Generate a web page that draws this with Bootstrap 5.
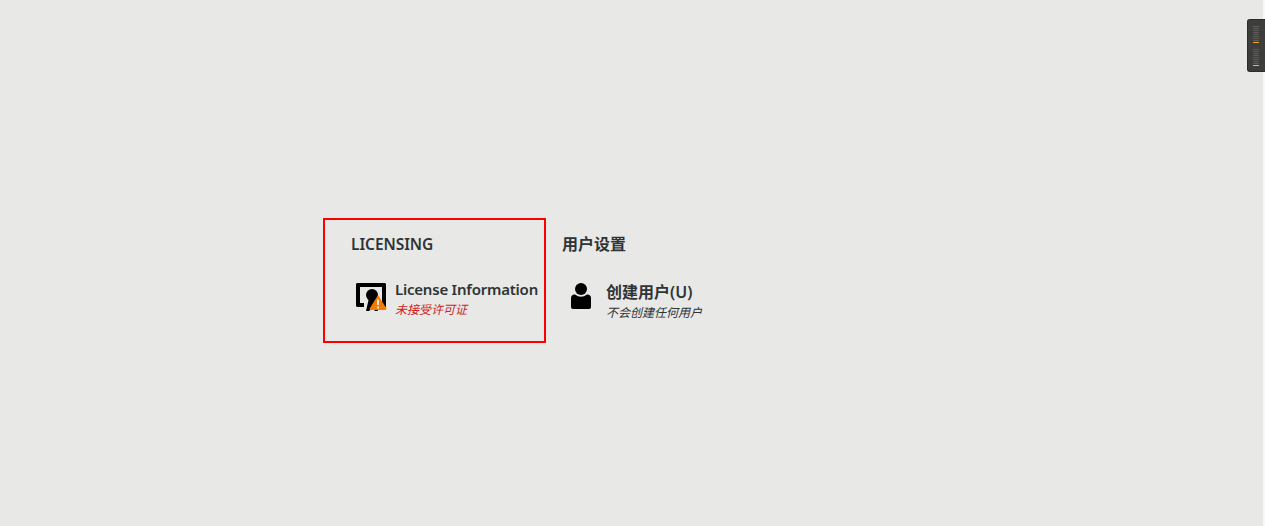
<!DOCTYPE html>
<html lang="zh-CN">
<head>
<meta charset="utf-8">
<meta name="viewport" content="width=device-width, initial-scale=1">
<title>安装信息摘要</title>
<link rel="stylesheet" href="https://cdn.jsdelivr.net/npm/bootstrap@5.3.0/dist/css/bootstrap.min.css">
<style>
body{background:#e8e8e6;color:#2e3436;font-family:"Noto Sans","Noto Sans CJK SC",sans-serif}
.hub{height:526px;padding:218px 0 0 323px;border-right:2px solid #f8f8f8}
.licensing{width:223px;height:125px;border:2px solid #f00;padding:14px 0 0 26px}
.users{padding:16px 0 0 16px}
.title{font-size:15px;line-height:20px;font-weight:600;margin:0;white-space:nowrap}
.title-cjk{font-size:16px;font-weight:700}
.latin{font-weight:600}
.spoke{margin-top:25px}
.status{font-size:12px;line-height:20px;font-style:italic;white-space:nowrap;padding-top:1px}
.status-error{color:#cc1f24}
.licensing h2{font-size:15.5px;letter-spacing:-.06px}
.licensing h3{letter-spacing:-.22px}
.licensing-icon{margin:4px 8px 0 5px}
.user-icon{margin:3px 14px 0 9px}
.user-text{padding-top:3px}
.meter{top:19px;right:0;width:18px;height:53px;background:#3d3d3b;border:1px solid #2c2c2c;border-right:0;border-radius:3px 0 0 3px}
.meter svg{display:block}
</style>
</head>
<body>
<main class="hub d-flex align-items-start">
  <section class="licensing">
    <h2 class="title">LICENSING</h2>
    <div class="spoke d-flex">
      <svg class="licensing-icon flex-shrink-0" width="31" height="29" viewBox="0 0 31 29">
        <path d="M1 0H29L30 1V24H26V4H4V20H8V24H1L0 23V1Z"/>
        <circle cx="16" cy="12" r="6"/>
        <path d="M13 15H19L22 28H19L17 25L13 28H10Z"/>
        <path d="M22 12L30.5 25.5Q30.5 27 29 27H14.5Q13 27 14 25Z" fill="#f57900"/>
        <path d="M21 16.5H23V22H21ZM21 23.5H23V25.5H21Z" fill="#f4e9d9"/>
      </svg>
      <div>
        <h3 class="title">License Information</h3>
        <div class="status status-error">未接受许可证</div>
      </div>
    </div>
  </section>
  <section class="users">
    <h2 class="title title-cjk">用户设置</h2>
    <div class="spoke d-flex">
      <svg class="user-icon flex-shrink-0" width="21" height="28" viewBox="0 0 21 28">
        <circle cx="10" cy="7" r="6"/>
        <path d="M3 12.5H4Q10 17 16 12.5H17Q20 13 20 16V25Q20 27 18 27H2Q0 27 0 25V16Q0 13 3 12.5Z"/>
      </svg>
      <div class="user-text">
        <h3 class="title title-cjk">创建用户<span class="latin">(U)</span></h3>
        <div class="status">不会创建任何用户</div>
      </div>
    </div>
  </section>
</main>
<aside class="meter position-absolute">
  <svg width="17" height="51" viewBox="0 0 17 51" shape-rendering="crispEdges">
    <path d="M5 6.5H11M5 8.5H11M5 10.5H11M5 12.5H11M5 14.5H11M5 16.5H11M5 18.5H11M5 20.5H11M5 29.5H11M5 31.5H11M5 33.5H11M5 35.5H11M5 37.5H11M5 39.5H11M5 41.5H11M5 43.5H11" stroke="#5d5d5a"/>
    <path d="M5 22.5H11" stroke="#ffa21d"/>
    <path d="M5 45.5H11" stroke="#91e34b"/>
  </svg>
</aside>
<script src="https://cdn.jsdelivr.net/npm/bootstrap@5.3.0/dist/js/bootstrap.bundle.min.js"></script>
</body>
</html>
